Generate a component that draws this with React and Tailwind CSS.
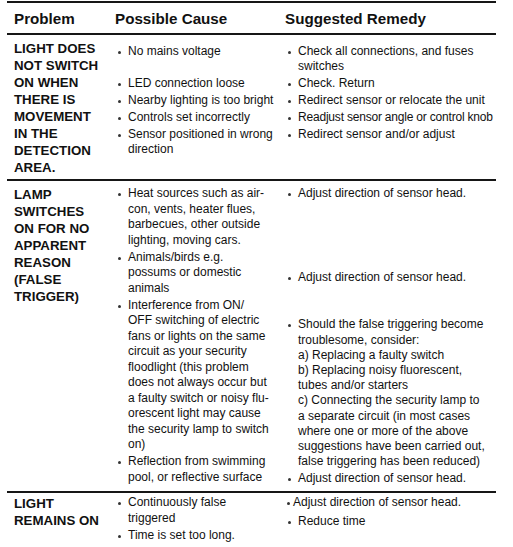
import React from "react";

const Dot = ({ className = "mr-[7px]" }) => (
  <span className={`mt-[7px] h-[3px] w-[3px] shrink-0 rounded-full bg-[#333] ${className}`} />
);

const Item = ({ lines, className = "", dotClass }) => (
  <div className={`flex items-start ${className}`}>
    <Dot className={dotClass} />
    <div>
      {lines.map((line, i) => (
        <div key={i} className="whitespace-nowrap">{line}</div>
      ))}
    </div>
  </div>
);

const Problem = ({ lines, className = "" }) => (
  <div className={`pl-[7px] text-[13.3px] font-bold leading-[17px] ${className}`}>
    {lines.map((line, i) => (
      <div key={i} className="whitespace-nowrap">{line}</div>
    ))}
  </div>
);

// first row: causes and remedies are lined up in pairs
const pairs = [
  [["No mains voltage"], ["Check all connections, and fuses", "switches"]],
  [["LED connection loose"], ["Check. Return"]],
  [["Nearby lighting is too bright"], ["Redirect sensor or relocate the unit"]],
  [["Controls set incorrectly"], [<span className="tracking-[-0.2px]">Readjust sensor angle or control knob</span>]],
  [["Sensor positioned in wrong", "direction"], ["Redirect sensor and/or adjust"]],
];

export default function App() {
  return (
    <div className="min-h-[547px] w-full bg-white pt-[1px] font-['Liberation_Sans',Arial,sans-serif] text-[#111]">
      <div className="ml-[7px] w-[489px]">
        {/* header */}
        <div className="grid h-[34px] grid-cols-[104px_170px_215px] border-y-2 border-[#161616] pt-[7px] text-[15.2px] font-bold leading-[18px]">
          <div className="pl-[7px]">Problem</div>
          <div className="pl-[4px]">Possible Cause</div>
          <div className="pl-[4px]">Suggested Remedy</div>
        </div>

        {/* row 1 */}
        <div className="grid h-[146px] grid-cols-[104px_385px] border-b-2 border-[#161616]">
          <Problem
            className="pt-[5px]"
            lines={["LIGHT DOES", "NOT SWITCH", "ON WHEN", "THERE IS", "MOVEMENT", "IN THE", "DETECTION", "AREA."]}
          />
          <div className="grid grid-cols-[170px_215px] content-start gap-y-[2px] pt-[9px] text-[12px] leading-[15px]">
            {pairs.map(([cause, remedy], i) => (
              <React.Fragment key={i}>
                <Item className="pl-[7px]" lines={cause} />
                <Item className="pl-[7px]" lines={remedy} />
              </React.Fragment>
            ))}
          </div>
        </div>

        {/* row 2 */}
        <div className="grid h-[312px] grid-cols-[104px_170px_215px] border-b-2 border-[#161616]">
          <Problem
            className="pt-[5px]"
            lines={["LAMP", "SWITCHES", "ON FOR NO", "APPARENT", "REASON", "(FALSE", "TRIGGER)"]}
          />
          <div className="flex flex-col gap-[1.5px] pl-[7px] pt-[5px] text-[12px] leading-[15.5px]">
            <Item lines={["Heat sources such as air-", "con, vents, heater flues,", "barbecues, other outside", "lighting, moving cars."]} />
            <Item lines={["Animals/birds e.g.", "possums or domestic", "animals"]} />
            <Item
              lines={[
                "Interference from ON/",
                "OFF switching of electric",
                "fans or lights on the same",
                "circuit as your security",
                "floodlight (this problem",
                "does not always occur but",
                "a faulty switch or noisy flu-",
                "orescent light may cause",
                "the security lamp to switch",
                "on)",
              ]}
            />
            <Item lines={["Reflection from swimming", "pool, or reflective surface"]} />
          </div>
          <div className="pl-[7px] pt-[5px] text-[12px] leading-[15.2px]">
            <Item lines={["Adjust direction of sensor head."]} />
            <Item className="mt-[69px]" lines={["Adjust direction of sensor head."]} />
            <Item
              className="mt-[32px]"
              lines={[
                "Should the false triggering become",
                "troublesome, consider:",
                "a) Replacing a faulty switch",
                "b) Replacing noisy fluorescent,",
                "tubes and/or starters",
                "c) Connecting the security lamp to",
                "a separate circuit (in most cases",
                "where one or more of the above",
                "suggestions have been carried out,",
                "false triggering has been reduced)",
              ]}
            />
            <Item className="mt-[2px]" lines={["Adjust direction of sensor head."]} />
          </div>
        </div>

        {/* row 3 */}
        <div className="grid grid-cols-[104px_170px_215px] pb-[8px]">
          <Problem className="pt-[2px]" lines={["LIGHT", "REMAINS ON"]} />
          <div className="flex flex-col gap-[1.5px] pl-[7px] pt-[2px] text-[12px] leading-[15.5px]">
            <Item lines={["Continuously false", "triggered"]} />
            <Item lines={["Time is set too long."]} />
          </div>
          <div className="pl-[7px] pt-[2px] text-[12px] leading-[15.5px]">
            <Item className="-ml-[1px]" dotClass="mr-[3px]" lines={["Adjust direction of sensor head."]} />
            <Item className="mt-[3.5px]" lines={["Reduce time"]} />
          </div>
        </div>
      </div>
    </div>
  );
}
